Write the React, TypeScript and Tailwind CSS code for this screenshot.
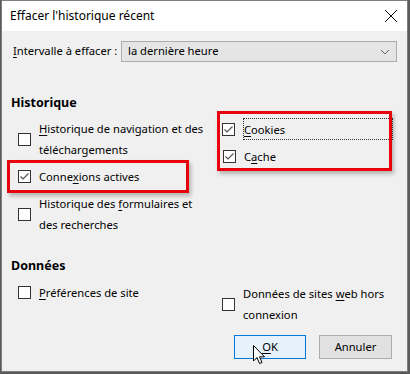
import type { ReactNode } from "react";

const font = { fontFamily: '"Noto Sans", "Open Sans", sans-serif' };

function Box({ checked }: { checked?: boolean }) {
  return (
    <span className="flex h-[13px] w-[13px] shrink-0 items-center justify-center border border-[#333] bg-white">
      {checked ? (
        <svg width="11" height="11" viewBox="0 0 11 11" fill="none">
          <path d="M1.5 5.5 L4 8 L9.5 2.5" stroke="#555" strokeWidth="1.2" />
        </svg>
      ) : null}
    </span>
  );
}

function Check({ checked, children }: { checked?: boolean; children: ReactNode }) {
  return (
    <div className="flex items-center gap-[8px] pl-[7px]">
      <Box checked={checked} />
      <span className="whitespace-nowrap leading-[21px]">{children}</span>
    </div>
  );
}

function Key({ children }: { children: ReactNode }) {
  return <span className="underline underline-offset-2">{children}</span>;
}

export default function App() {
  return (
    <div className="h-[374px] w-[410px] bg-[#5a5a5a] pl-px" style={font}>
      <div className="flex h-[372px] w-[407px] flex-col border border-[#7d7d7d] bg-[#f0f0f0] text-[11.2px] text-black">
        <div className="flex h-[30px] items-center justify-between bg-white pl-[8px] pr-[8px]">
          <span className="text-[12px]">Effacer l'historique récent</span>
          <svg width="14" height="14" viewBox="0 0 14 14" className="mr-[1px]">
            <path d="M1 1 L13 13 M13 1 L1 13" stroke="#111" strokeWidth="1" />
          </svg>
        </div>

        <div className="flex items-center px-[10px] pt-[10px]">
          <span className="w-[109px] whitespace-nowrap pl-[1px]">
            <Key>I</Key>ntervalle à effacer :
          </span>
          <div className="flex h-[21px] flex-1 items-center justify-between border border-[#adadad] bg-[#e5e5e5] pl-[6px] pr-[6px]">
            <span>la dernière heure</span>
            <svg width="10" height="6" viewBox="0 0 10 6" fill="none">
              <path d="M1 1 L5 5 L9 1" stroke="#666" strokeWidth="1" />
            </svg>
          </div>
        </div>

        <div className="mt-[33px] px-[9px] text-[12.5px] font-bold leading-[16px]">Historique</div>

        <div className="mt-[7px] grid grid-cols-[205px_1fr] pl-[9px]">
          <div className="flex flex-col gap-[6px]">
            <Check>
              <Key>H</Key>istorique de navigation et des
              <br />
              téléchargements
            </Check>
            <div className="relative">
              <Check checked>
                Conne<Key>x</Key>ions actives
              </Check>
              <div className="absolute left-[-4px] top-[-6px] h-[33px] w-[182px] border-[3px] border-[#e8000b] shadow-[2px_3px_4px_rgba(0,0,0,0.25)]" />
            </div>
            <Check>
              Historique des <Key>f</Key>ormulaires et
              <br />
              des recherches
            </Check>
          </div>

          <div className="relative flex flex-col gap-[6px] pr-[14px]">
            <div className="flex items-center gap-[8px] pl-[6px]">
              <Box checked />
              <span className="flex h-[22px] flex-1 items-center border border-dotted border-[#333] leading-[21px]">
                <Key>C</Key>ookies
              </span>
            </div>
            <Check checked>
              C<Key>a</Key>che
            </Check>
            <div className="absolute left-[1px] top-[-7px] h-[60px] w-[175px] border-[3px] border-[#e8000b] shadow-[2px_3px_4px_rgba(0,0,0,0.25)]" />
          </div>
        </div>

        <div className="mt-[23px] px-[9px] text-[12.5px] font-bold leading-[16px]">Données</div>

        <div className="mt-[9px] grid grid-cols-[205px_1fr] pl-[9px]">
          <div className="-mt-[1px]">
            <Check>
              <Key>P</Key>références de site
            </Check>
          </div>
          <div className="flex items-center gap-[8px] pl-[6px]">
            <Box />
            <span className="leading-[21px]">
              Données de sites <Key>w</Key>eb hors
              <br />
              connexion
            </span>
          </div>
        </div>

        <div className="mt-auto flex justify-end gap-[13px] pb-[12px] pr-[15px]">
          <div className="relative">
            <button className="flex h-[24px] w-[72px] items-center justify-center border border-[#0078d7] bg-[#e5f1fb]">
              <Key>O</Key>K
            </button>
            <svg
              width="13"
              height="20"
              viewBox="0 0 13 20"
              className="absolute left-[19px] top-[10px]"
            >
              <path
                d="M0.5 0.5 L0.5 16 L4 12.5 L6.5 18.5 L9 17.5 L6.5 11.8 L11.5 11.8 Z"
                fill="white"
                stroke="black"
                strokeWidth="1"
              />
            </svg>
          </div>
          <button className="flex h-[24px] w-[73px] items-center justify-center border border-[#adadad] bg-[#e1e1e1]">
            Annuler
          </button>
        </div>
      </div>
    </div>
  );
}
